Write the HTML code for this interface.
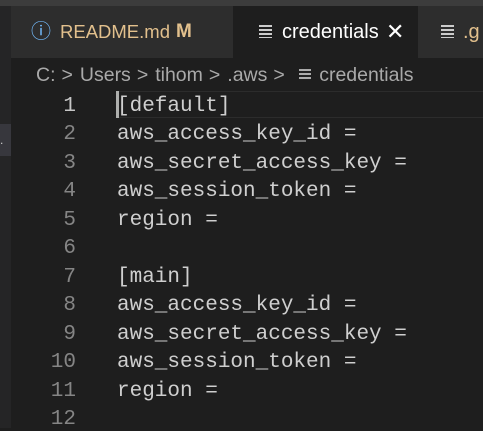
<!DOCTYPE html>
<html><head><style>
body{margin:0;width:483px;height:428px;background:#1e1e1e;overflow:hidden;position:relative;font-family:"Liberation Sans",sans-serif}
.top{position:absolute;left:0;top:0;width:483px;height:6px;background:#3c3c3c}
.side{position:absolute;left:0;top:6px;width:11px;height:422px;background:#252526}
.sidehl{position:absolute;left:0;top:124px;width:11px;height:32px;background:#37373d;color:#ccc;font-size:12px;line-height:32px}
.tabs{position:absolute;left:11px;top:6px;width:472px;height:52px;background:#252526}
.tab{position:absolute;top:0;height:52px;line-height:52px;font-size:19px}
.t1{left:0;width:222px;background:#2d2d2d;color:#e2c08d}
.t2{left:222px;width:185px;background:#1e1e1e;color:#fff}
.t3{left:407px;width:65px;background:#2d2d2d;color:#e2c08d}
.bc{position:absolute;left:36px;top:58px;height:34px;line-height:34px;font-size:19.5px;color:#a9a9a9;white-space:nowrap}
.bc .s{margin:0 7px 0 6px}
.code{position:absolute;left:0;top:95px;font-family:"Liberation Mono",monospace;font-size:21px;color:#cfcfcf}
.ln{position:absolute;left:0;width:76px;text-align:right;color:#858585}
.tx{position:absolute;left:117px;white-space:pre}
.hl{position:absolute;left:117px;top:91px;width:366px;height:27px;border:1px solid #2c2c2c;border-right:none;box-sizing:border-box}
.cur{position:absolute;left:116px;top:91px;width:3px;height:27px;background:#aeafad}
.ic{position:absolute;top:19px;width:13px;height:13px;background:linear-gradient(#ccc 0 2px,transparent 2px 4px,#ccc 4px 6px,transparent 6px 8px,#ccc 8px 10px,transparent 10px 12px,#ccc 12px 13px)}
</style></head><body>
<div class="top"></div>
<div class="side"></div><div class="sidehl">.</div>
<div class="tabs">
 <div class="tab t1"><span style="position:absolute;left:20px;top:0;color:#75beff;font-size:20px">ⓘ</span><span style="position:absolute;left:49px;font-size:18.5px">README.md</span><span style="position:absolute;left:165px;font-weight:bold">M</span></div>
 <div class="tab t2"><span class="ic" style="left:26px"></span><span style="position:absolute;left:49px;font-size:20px">credentials</span><span style="position:absolute;left:153px;font-size:22px">✕</span></div>
 <div class="tab t3"><span class="ic" style="left:23px"></span><span style="position:absolute;left:45px;font-size:20px">.g</span></div>
</div>
<div class="bc">C:<span class="s">&gt;</span>Users<span class="s">&gt;</span>tihom<span class="s">&gt;</span>.aws<span class="s">&gt;</span> <span style="display:inline-block;width:12px;height:12px;background:linear-gradient(#aaa 0 2px,transparent 2px 4px,#aaa 4px 6px,transparent 6px 8px,#aaa 8px 10px,transparent 10px 12px);margin:0 8px 0 2px"></span>credentials</div>
<div class="hl"></div>
<div class="code">
<div class="ln" style="top:0px;color:#c6c6c6">1</div><div class="tx" style="top:0px">[default]</div>
<div class="ln" style="top:28px">2</div><div class="tx" style="top:28px">aws_access_key_id =</div>
<div class="ln" style="top:57px">3</div><div class="tx" style="top:57px">aws_secret_access_key =</div>
<div class="ln" style="top:85px">4</div><div class="tx" style="top:85px">aws_session_token =</div>
<div class="ln" style="top:114px">5</div><div class="tx" style="top:114px">region =</div>
<div class="ln" style="top:142px">6</div>
<div class="ln" style="top:171px">7</div><div class="tx" style="top:171px">[main]</div>
<div class="ln" style="top:199px">8</div><div class="tx" style="top:199px">aws_access_key_id =</div>
<div class="ln" style="top:228px">9</div><div class="tx" style="top:228px">aws_secret_access_key =</div>
<div class="ln" style="top:256px">10</div><div class="tx" style="top:256px">aws_session_token =</div>
<div class="ln" style="top:285px">11</div><div class="tx" style="top:285px">region =</div>
<div class="ln" style="top:313px">12</div>
</div>
<div class="cur"></div>
</body></html>
